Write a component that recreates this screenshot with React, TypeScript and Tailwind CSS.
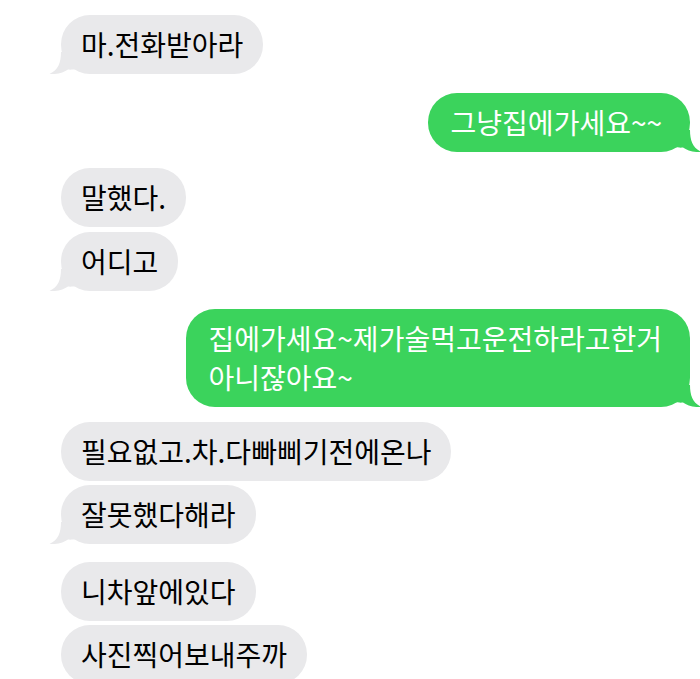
import React from "react";

type Msg = { text: React.ReactNode; me: boolean; tail: boolean; mt: string };

const GRAY = "#e9e9eb";
const GREEN = "#3bd35c";

function Tail({ me }: { me: boolean }) {
  return (
    <svg
      width="28"
      height="22"
      viewBox="0 0 28 22"
      className={
        me
          ? "absolute bottom-0 right-[-12px] -scale-x-100"
          : "absolute bottom-0 left-[-12px]"
      }
    >
      <path
        d="M12 0 C12 11 9 18 0.5 22 C8 22.6 15 20.5 19 17.5 C21 17.8 24 17.6 28 17 L28 0 Z"
        fill={me ? GREEN : GRAY}
      />
    </svg>
  );
}

function Bubble({ m }: { m: Msg }) {
  return (
    <div className={`flex ${m.me ? "justify-end pr-[10px]" : "justify-start pl-[61px]"} ${m.mt}`}>
      <div
        className={`relative rounded-[29px] py-[10px] text-[28px] leading-[39px] whitespace-nowrap ${
          m.me ? "bg-[#3bd35c] text-white pl-[23px] pr-[28px]" : "bg-[#e9e9eb] text-black px-[20px]"
        }`}
      >
        {m.tail && <Tail me={m.me} />}
        <span className="relative">{m.text}</span>
      </div>
    </div>
  );
}

const msgs: Msg[] = [
  { text: "마.전화받아라", me: false, tail: true, mt: "mt-0" },
  { text: "그냥집에가세요~~", me: true, tail: true, mt: "mt-[19px]" },
  { text: "말했다.", me: false, tail: false, mt: "mt-[16px]" },
  { text: "어디고", me: false, tail: true, mt: "mt-[5px]" },
  {
    text: (
      <>
        집에가세요~제가술먹고운전하라고한거
        <br />
        아니잖아요~
      </>
    ),
    me: true,
    tail: true,
    mt: "mt-[18px]",
  },
  { text: "필요없고.차.다빠삐기전에온나", me: false, tail: false, mt: "mt-[15px]" },
  { text: "잘못했다해라", me: false, tail: true, mt: "mt-[4px]" },
  { text: "니차앞에있다", me: false, tail: false, mt: "mt-[18px]" },
  { text: "사진찍어보내주까", me: false, tail: false, mt: "mt-[4px]" },
];

export default function App() {
  return (
    <div
      className="w-[700px] h-[679px] overflow-hidden bg-white pt-[15px]"
      style={{ fontFamily: '"Noto Sans CJK KR", "Noto Sans", sans-serif' }}
    >
      {msgs.map((m, i) => (
        <Bubble key={i} m={m} />
      ))}
    </div>
  );
}
